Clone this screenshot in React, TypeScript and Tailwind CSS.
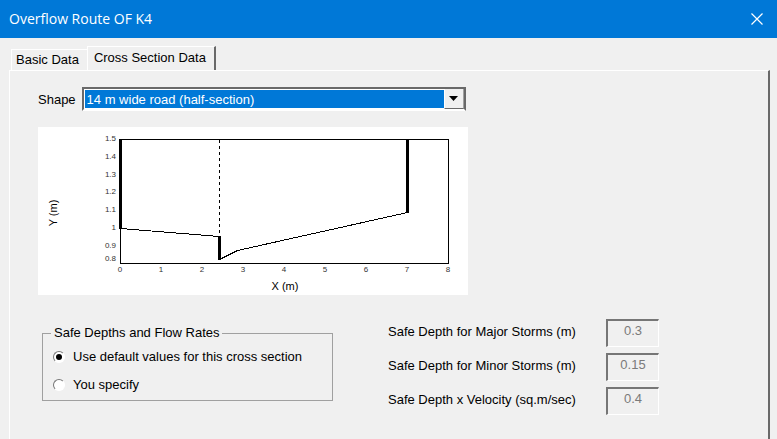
const yTicks = [
  { label: '1.5', y: 12 },
  { label: '1.4', y: 30 },
  { label: '1.3', y: 48 },
  { label: '1.2', y: 65 },
  { label: '1.1', y: 83 },
  { label: '1', y: 101 },
  { label: '0.9', y: 119 },
  { label: '0.8', y: 132 },
];

const xTicks = [0, 1, 2, 3, 4, 5, 6, 7, 8];

const limits = [
  { id: 'major', label: 'Safe Depth for Major Storms (m)', value: '0.3' },
  { id: 'minor', label: 'Safe Depth for Minor Storms (m)', value: '0.15' },
  { id: 'velocity', label: 'Safe Depth x Velocity (sq.m/sec)', value: '0.4' },
];

function CrossSectionChart() {
  return (
    <svg viewBox="0 0 430 168" className="block w-full max-w-[430px] bg-white" role="img" aria-label="Road cross section">
      <g fill="none" stroke="#000" shapeRendering="crispEdges">
        <rect x="82.5" y="12.5" width="328" height="124" />
        <path d="M82.5 101.5 L181.5 109.5 M181.5 132.5 L199.5 123.5 L369.5 85.5" />
        <path d="M181.5 13 V109" strokeDasharray="3 3" />
        {/* walls and kerb */}
        <path d="M82.5 12 V102 M181.5 109 V133 M369.5 12 V86" strokeWidth="3" />
      </g>
      <g fontSize="8" fill="#333" className="font-['Liberation_Sans',Arial,sans-serif]">
        {yTicks.map((tick) => (
          <text key={tick.label} x="78" y={tick.y + 2} textAnchor="end">
            {tick.label}
          </text>
        ))}
        {xTicks.map((tick) => (
          <text key={tick} x={82 + tick * 41} y="145" textAnchor="middle">
            {tick}
          </text>
        ))}
      </g>
      <g fontSize="11" textAnchor="middle" className="font-['Liberation_Sans',Arial,sans-serif]">
        <text x="247" y="163">X (m)</text>
        <text transform="translate(19 86) rotate(-90)">Y (m)</text>
      </g>
    </svg>
  );
}

function Radio({ label, checked }: { label: string; checked?: boolean }) {
  return (
    <label className="flex items-center gap-2">
      <input
        type="radio"
        name="depths"
        defaultChecked={checked}
        className="m-0 grid size-3 appearance-none place-content-center rounded-full border border-t-[#767676] border-r-white border-b-white border-l-[#767676] bg-white before:size-1.5 before:rounded-full checked:before:bg-black"
      />
      {label}
    </label>
  );
}

export default function App() {
  return (
    <div className="flex min-h-screen flex-col bg-[#f0f0f0] font-['Liberation_Sans',Arial,sans-serif] text-[13px] leading-4 text-black">
      <header className="flex h-[38px] items-center justify-between bg-[#0078d7] pr-3.5 pl-[9px] text-white">
        <h1 className="font-['Open_Sans',sans-serif] text-sm">Overflow Route OF K4</h1>
        <button type="button" aria-label="Close">
          <svg viewBox="0 0 12 12" className="size-3" stroke="currentColor" strokeWidth="1.2">
            <path d="M0.5 0.5 L11.5 11.5 M11.5 0.5 L0.5 11.5" />
          </svg>
        </button>
      </header>

      <main className="flex grow flex-col pt-2 pr-[7px] pl-[9px]">
        <div role="tablist" className="flex items-end pl-0.5">
          <button type="button" role="tab" aria-selected="false" className="h-[21px] border-t border-l border-white pr-2 pl-1">
            Basic Data
          </button>
          <button
            type="button"
            role="tab"
            aria-selected="true"
            className="h-6 border-t border-r-2 border-l border-t-white border-r-[#696969] border-l-white pr-2 pb-0.5 pl-1.5"
          >
            Cross Section Data
          </button>
        </div>

        <section className="grow border-t border-r-2 border-l border-t-white border-r-[#696969] border-l-white pt-4 pl-7">
          <div className="flex items-center gap-1.5">
            <label htmlFor="shape" className="pt-0.5">
              Shape
            </label>
            <div className="relative w-full max-w-[384px] border-2 border-t-[#696969] border-r-[#696969] border-b-white border-l-[#696969] bg-white p-px">
              <select id="shape" className="block h-[18px] w-full appearance-none bg-[#0078d7] pt-px pl-0.5 text-white outline-none">
                <option>14 m wide road (half-section)</option>
              </select>
              <span className="pointer-events-none absolute inset-y-0 right-0 flex w-5 items-center justify-center border-r border-b border-l border-r-[#a0a0a0] border-b-[#696969] border-l-white bg-[#f0f0f0]">
                <svg viewBox="0 0 9 5" className="h-[5px] w-[9px]">
                  <path d="M0 0 H9 L4.5 5 Z" />
                </svg>
              </span>
            </div>
          </div>

          <div className="mt-4">
            <CrossSectionChart />
          </div>

          <div className="mt-6 flex items-start">
            <fieldset className="mt-1.5 ml-1 h-[76px] w-[291px] border border-[#a0a0a0] px-2">
              <legend className="px-[3px]">Safe Depths and Flow Rates</legend>
              <div className="flex flex-col gap-3 px-0.5 pt-2">
                <Radio label="Use default values for this cross section" checked />
                <Radio label="You specify" />
              </div>
            </fieldset>

            <div className="ml-[55px] flex flex-col gap-1.5">
              {limits.map((limit) => (
                <div key={limit.id} className="flex items-center">
                  <label htmlFor={limit.id} className="w-[218px] pb-0.5">
                    {limit.label}
                  </label>
                  <input
                    id={limit.id}
                    type="text"
                    defaultValue={limit.value}
                    disabled
                    className="h-7 w-[53px] border-t-2 border-r border-b border-l-2 border-t-[#767676] border-r-white border-b-white border-l-[#767676] pb-1.5 text-center text-[#7a7a7a]"
                  />
                </div>
              ))}
            </div>
          </div>
        </section>
      </main>
    </div>
  );
}
